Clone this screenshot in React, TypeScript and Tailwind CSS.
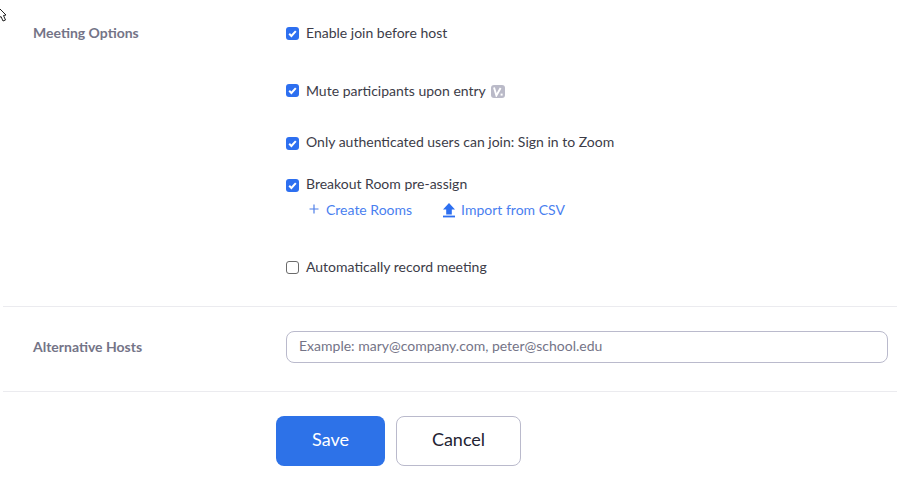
import React from "react";

function Box({ checked = true, className = "" }: { checked?: boolean; className?: string }) {
  return checked ? (
    <span className={`flex h-[13px] w-[13px] shrink-0 items-center justify-center rounded-[3px] bg-[#2d6ff0] ${className}`}>
      <svg width="11" height="11" viewBox="0 0 11 11" fill="none">
        <path d="M2.2 5.8 L4.4 8 L8.8 3.1" stroke="#fff" strokeWidth="2" />
      </svg>
    </span>
  ) : (
    <span className={`h-[13px] w-[13px] shrink-0 rounded-[3px] border border-[#6b6b6b] bg-white ${className}`} />
  );
}

function Row({ label, checked = true, className = "", boxClass = "", children }: { label: string; checked?: boolean; className?: string; boxClass?: string; children?: React.ReactNode }) {
  return (
    <div className={`flex h-5 items-center text-[14px] text-[#3c3c48] ${className}`}>
      <Box checked={checked} className={boxClass} />
      <span className="ml-[7px]">{label}</span>
      {children}
    </div>
  );
}

export default function App() {
  return (
    <div className="relative h-[490px] w-[900px] overflow-hidden bg-white font-['Lato',sans-serif]">
      <svg className="absolute left-0 top-[7px]" width="8" height="16" viewBox="0 0 8 16" fill="white" stroke="#222" strokeWidth="1">
        <path d="M-1 1 L6 8 L3.5 8.5 L5.5 13 L3 14 L1 9.5 L-1 11 Z" />
      </svg>

      <div className="mx-[3px] flex h-[307px] border-b border-[#ebebef] pt-[22px]">
        <div className="ml-[30px] mt-px w-[253px] text-[14px] font-bold leading-5 text-[#747487]">Meeting Options</div>
        <div className="flex flex-col">
          <Row label="Enable join before host" boxClass="mt-[2px]" />
          <Row label="Mute participants upon entry" className="mt-[38px]">
            <span className="ml-[5px] mt-[2px] flex h-[13px] w-[14px] items-center justify-center rounded-[3px] bg-[#babac8]">
              <svg width="12" height="11" viewBox="0 0 12 11" fill="none">
                <path d="M2 1.5 L4.4 9.5 L8.6 2" stroke="#fff" strokeWidth="1.9" />
                <rect x="8.6" y="7.6" width="2" height="2" fill="#fff" />
              </svg>
            </span>
          </Row>
          <Row label="Only authenticated users can join: Sign in to Zoom" className="mt-[31px]" boxClass="mt-[4px]" />
          <Row label="Breakout Room pre-assign" className="mt-[22px]" boxClass="mt-[4px]" />
          <div className="mt-[6px] flex h-5 items-center pl-[23px] text-[14px] text-[#4a7ff0]">
            <svg width="10" height="10" viewBox="0 0 10 10" fill="none" stroke="#4f7fe8" strokeWidth="1.2">
              <path d="M5 0.5 V9.5 M0.5 5 H9.5" />
            </svg>
            <span className="ml-[7px]">Create Rooms</span>
            <svg className="ml-[30px] mt-[2px]" width="14" height="16" viewBox="0 0 14 16" fill="#2d6ff0">
              <path d="M7 1 L13 7.5 H9.8 V12.5 H4.2 V7.5 H1 Z" />
              <rect x="1" y="13.6" width="12" height="1.8" />
            </svg>
            <span className="ml-[5px]">Import from CSV</span>
          </div>
          <Row label="Automatically record meeting" checked={false} className="mt-[37px]" boxClass="mt-[2px]" />
        </div>
      </div>

      <div className="mx-[3px] flex h-[85px] border-b border-[#ebebef] pt-[24px]">
        <div className="ml-[30px] w-[253px] text-[14px] font-bold leading-8 text-[#747487]">Alternative Hosts</div>
        <div className="flex h-8 w-[602px] items-center rounded-lg border border-[#babacc] px-3 pb-[3px] text-[14px] text-[#747487]">
          Example: mary@company.com, peter@school.edu
        </div>
      </div>

      <div className="ml-[276px] mt-[24px] flex gap-[11px]">
        <button className="h-[50px] w-[109px] rounded-lg bg-[#2d72e8] pb-[3px] text-[18px] text-white">Save</button>
        <button className="h-[50px] w-[125px] rounded-lg border border-[#babacc] bg-white pb-[3px] text-[18px] text-[#232333]">Cancel</button>
      </div>
    </div>
  );
}
